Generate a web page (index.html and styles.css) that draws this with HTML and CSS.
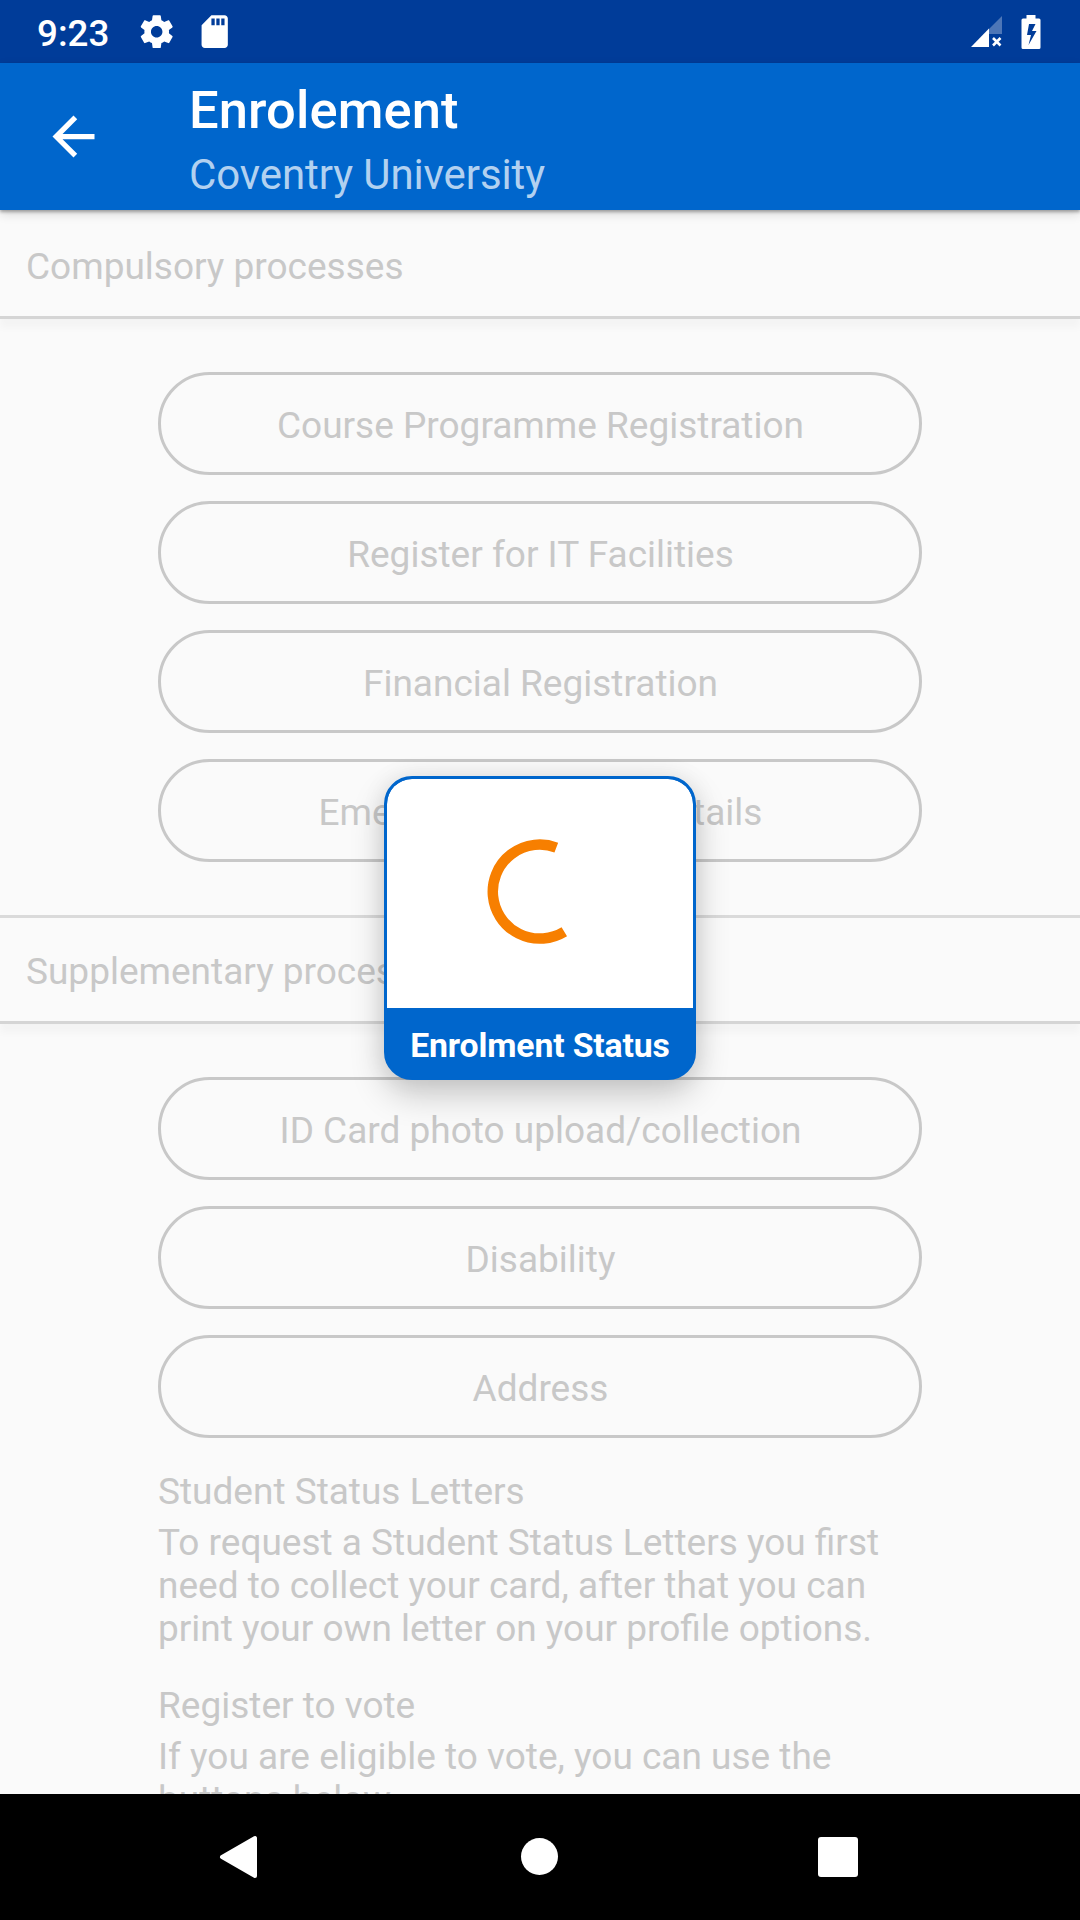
FILE: index.html
```html
<!DOCTYPE html>
<html lang="en">
<head>
<meta charset="utf-8">
<title>Enrolement</title>
<link rel="stylesheet" href="styles.css">
</head>
<body>
<div class="screen">
  <div class="status-bar">
    <span class="clock">9:23</span>
    <svg class="status-icon settings" viewBox="0 0 24 24"><path d="M19.43 12.98c.04-.32.07-.64.07-.98s-.03-.66-.07-.98l2.11-1.65c.19-.15.24-.42.12-.64l-2-3.46c-.12-.22-.39-.3-.61-.22l-2.49 1c-.52-.4-1.08-.73-1.69-.98l-.38-2.65C14.46 2.18 14.25 2 14 2h-4c-.25 0-.46.18-.49.42l-.38 2.65c-.61.25-1.17.59-1.69.98l-2.49-1c-.23-.09-.49 0-.61.22l-2 3.46c-.13.22-.07.49.12.64l2.11 1.65c-.04.32-.07.65-.07.98s.03.66.07.98l-2.11 1.65c-.19.15-.24.42-.12.64l2 3.46c.12.22.39.3.61.22l2.49-1c.52.4 1.08.73 1.69.98l.38 2.65c.03.24.24.42.49.42h4c.25 0 .46-.18.49-.42l.38-2.65c.61-.25 1.17-.59 1.69-.98l2.49 1c.23.09.49 0 .61-.22l2-3.46c.12-.22.07-.49-.12-.64l-2.11-1.65zM12 15.5c-1.93 0-3.5-1.57-3.5-3.5s1.57-3.5 3.5-3.5 3.5 1.57 3.5 3.5-1.57 3.5-3.5 3.5z"/></svg>
    <svg class="status-icon sd-card" viewBox="0 0 24 24"><path d="M18 2h-8L4.02 8 4 20c0 1.100.9 2 2 2h12c1.100 0 2-.9 2-2V4c0-1.100-.9-2-2-2zm-6 6h-2V4h2v4zm3 0h-2V4h2v4zm3 0h-2V4h2v4z"/></svg>
    <svg class="signal" viewBox="0 0 31 31"><path d="M31 0V18H18V13z" opacity=".3"/><path d="M18 12.500V31H0z"/><path d="M22 22l7.500 7.500M29.500 22L22 29.500" fill="none" stroke="#fff" stroke-width="2.600"/></svg>
    <svg class="battery" viewBox="0 0 20 34"><path fill-rule="evenodd" d="M5.500 0h9v3.500h3.500a1.500 1.500 0 0 1 1.500 1.500v27.500a1.500 1.500 0 0 1-1.500 1.500H2a1.500 1.500 0 0 1-1.500-1.500V5A1.500 1.500 0 0 1 2 3.500h3.500zM8 9L6 20h4L7.500 30l8-14h-4.500L14.500 9z"/></svg>
  </div>
  <header class="app-bar">
    <svg class="back-arrow" viewBox="0 0 24 24"><path d="M20 11H7.830l5.590-5.590L12 4l-8 8 8 8 1.410-1.410L7.830 13H20v-2z"/></svg>
    <div class="titles">
      <h1 class="title">Enrolement</h1>
      <p class="subtitle">Coventry University</p>
    </div>
  </header>
  <main class="content">
    <h2 class="section-header first">Compulsory processes</h2>
    <div class="button-list">
      <button class="pill">Course Programme Registration</button>
      <button class="pill">Register for IT Facilities</button>
      <button class="pill">Financial Registration</button>
      <button class="pill">Emergency Contact Details</button>
    </div>
    <h2 class="section-header">Supplementary processes</h2>
    <div class="button-list">
      <button class="pill">ID Card photo upload/collection</button>
      <button class="pill">Disability</button>
      <button class="pill">Address</button>
    </div>
    <section class="info">
      <h3 class="info-title">Student Status Letters</h3>
      <p class="info-text">To request a Student Status Letters you first<br>need to collect your card, after that you can<br>print your own letter on your profile options.</p>
    </section>
    <section class="info">
      <h3 class="info-title">Register to vote</h3>
      <p class="info-text">If you are eligible to vote, you can use the<br>buttons below.</p>
    </section>
  </main>
  <nav class="nav-bar">
    <svg class="nav-icon" viewBox="0 0 44 44"><path d="M38 3V41L5 22z" stroke="#fff" stroke-width="4" stroke-linejoin="round"/></svg>
    <svg class="nav-icon" viewBox="0 0 44 44"><circle cx="22.500" cy="21.500" r="18.500"/></svg>
    <svg class="nav-icon" viewBox="0 0 44 44"><rect x="2" y="2" width="40" height="40" rx="3"/></svg>
  </nav>
  <div class="dialog">
    <div class="dialog-body">
      <svg class="spinner" viewBox="-52.5 -52.5 105 105"><path d="M16.800 -43.900A47 47 0 1 0 24.800 40.200"/></svg>
    </div>
    <div class="dialog-label">Enrolment Status</div>
  </div>
</div>
</body>
</html>
```
FILE: styles.css
```css
* { box-sizing: border-box; margin: 0; padding: 0; }

body {
  font-family: Roboto, "Liberation Sans", sans-serif;
  background: #fafafa;
}

svg { display: block; fill: #fff; flex: none; }

.screen {
  position: relative;
  display: flex;
  flex-direction: column;
  width: 1080px;
  height: 1920px;
  overflow: hidden;
}

.status-bar {
  display: flex;
  align-items: center;
  flex: none;
  height: 63px;
  padding: 0 39px 0 37px;
  background: #003c99;
}

.clock {
  width: 100px;
  padding-top: 3px;
  font-size: 36.75px;
  font-weight: 500;
  line-height: 43px;
  color: #fff;
}

.status-icon { width: 39.400px; height: 39.400px; }
.sd-card { margin-left: 19px; }
.signal { width: 31px; height: 31px; margin-left: auto; }
.battery { width: 20px; height: 34px; margin-left: 19px; }

.app-bar {
  position: relative;
  z-index: 1;
  display: flex;
  flex: none;
  height: 147px;
  padding: 17px 42px 0;
  background: #0066cc;
  box-shadow: 0 2px 3px rgba(0, 0, 0, .3), 0 4px 10px rgba(0, 0, 0, .14);
}

.back-arrow { width: 63px; height: 63px; margin: 25px 84px 0 0; }
.title { font-size: 52.5px; font-weight: 500; line-height: 61px; letter-spacing: .1px; color: #fff; }
.subtitle { margin-top: 9px; font-size: 42px; line-height: 49px; letter-spacing: -.1px; color: #b2d1f0; }

.content {
  flex: 1;
  overflow: hidden;
  font-size: 37px;
  line-height: 43px;
  color: #c8c8c8;
}

.section-header {
  height: 109px;
  padding: 32px 26px 0;
  border: solid #d5d5d5;
  border-width: 3px 0;
  border-top-color: #dadada;
  font-size: inherit;
  font-weight: 400;
  box-shadow: 0 9px 7px rgba(0, 0, 0, .028);
}
.first { border-top-color: transparent; }

.button-list {
  display: flex;
  flex-direction: column;
  gap: 26px;
  padding: 53px 158px;
}
.section-header:not(.first) + .button-list { padding-bottom: 32px; }

.pill {
  height: 103px;
  padding: 4px 0 0 1px;
  border: 3px solid #c8c8c8;
  border-radius: 52px;
  background: transparent;
  font: inherit;
  color: inherit;
}

.info { padding: 0 158px 34px; }
.info-title { font-size: inherit; font-weight: 400; }
.info-text { margin-top: 8px; white-space: nowrap; }

.nav-bar {
  display: flex;
  justify-content: space-between;
  flex: none;
  height: 126px;
  padding: 41px 220px 0 217px;
  background: #000;
}
.nav-icon { width: 44px; height: 44px; }

.dialog {
  position: absolute;
  z-index: 2;
  left: 384px;
  top: 776px;
  width: 312px;
  height: 304px;
  overflow: hidden;
  display: flex;
  flex-direction: column;
  border: 3px solid #0066cc;
  border-radius: 28px;
  background: #0066cc;
  box-shadow: 0 15px 34px rgba(0, 0, 0, .2), 0 0 24px rgba(0, 0, 0, .08);
}
.dialog-body {
  display: flex;
  align-items: center;
  justify-content: center;
  height: 229px;
  border-radius: 25px 25px 0 0;
  background: #fff;
}
.spinner { width: 105px; height: 105px; margin: 0 0.5px 3.5px 0; }
.spinner path { fill: none; stroke: #f77f00; stroke-width: 10.5; }
.dialog-label {
  padding-top: 18px;
  font-size: 33.75px;
  font-weight: 700;
  line-height: 40px;
  letter-spacing: -.15px;
  text-align: center;
  color: #fff;
  white-space: nowrap;
}
```
